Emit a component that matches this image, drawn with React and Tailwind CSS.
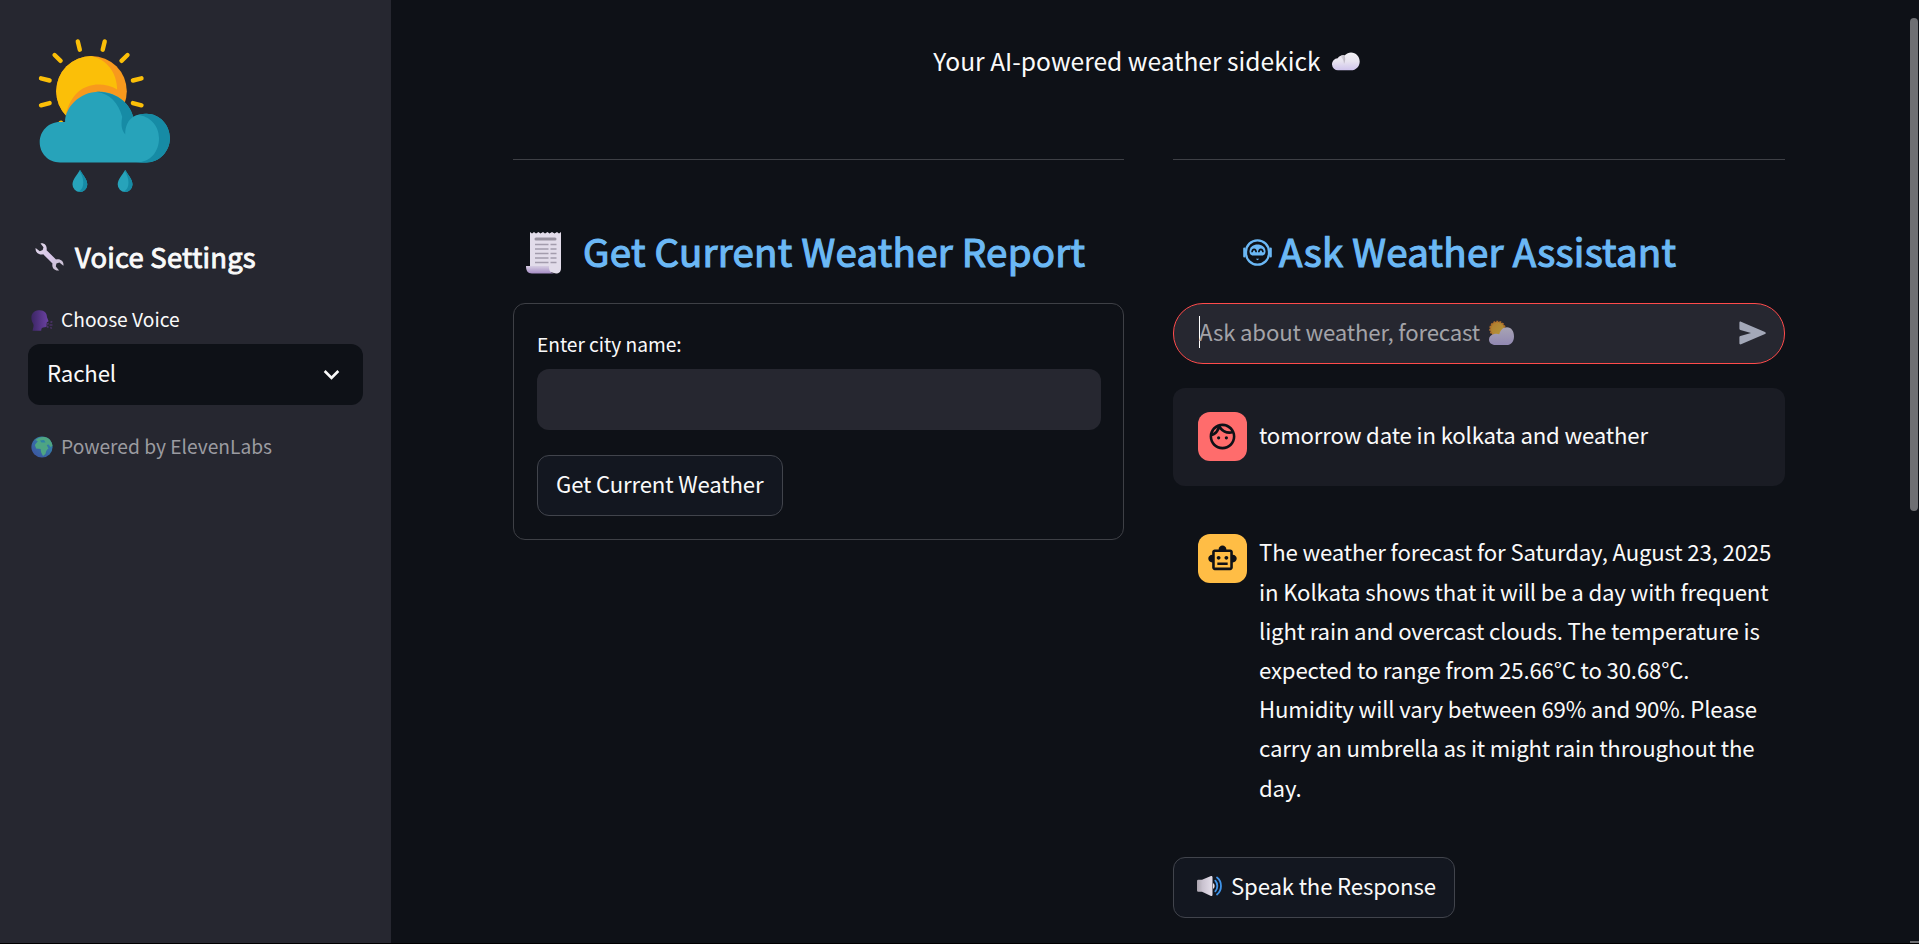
import { MdOutlineFace, MdOutlineSmartToy, MdExpandMore } from "react-icons/md";

function WeatherLogo() {
  return (
    <svg viewBox="0 0 180 190" className="block h-[190px] w-[180px]">
      <path d="M57.800 21.500l2 8.200M84.700 21.500l-2 8.200M34.600 35l6 5.800M107.500 35l-6 5.800M21 58.300l8.600 2.200M121.500 58.300l-8.600 2.200M21 85.300l8.600-2.200M121.500 85.300l-8.600-2.200M40.500 103l.5-.3" stroke="#fbbf08" strokeWidth="4.400" strokeLinecap="round" />
      <clipPath id="sun"><circle cx="71.500" cy="71.300" r="35.300" /></clipPath>
      <g clipPath="url(#sun)">
        <rect x="30" y="30" width="80" height="80" fill="#f8991d" />
        <path d="M71 36c15 3 26 16 26.200 33.500C80 60 53 62 45.500 96L30 100V30h41z" fill="#fbbf08" />
      </g>
      <path d="M40 142.500C28 142.500 19.700 133 19.700 122.300S28 102 40 102h5.100C44.800 88 59 71.700 79 71.700c16 0 30 10 34.200 25 4-2.300 8-3 13.300-3 13 0 23.400 11 23.400 24.400s-10.400 24.400-23.400 24.400z" fill="#27a3ba" />
      <path d="M76 71.700c18 0 33 9 37.200 25-5 3.500-8 9-8 17.500-3.500-4-4.500-9-3-17.500-4-14-12-23-26.200-25z" fill="#168ba5" />
      <path d="M118 95c4-1.200 6-1.300 8.500-1.300 13 0 23.400 11 23.400 24.400s-10.400 24.400-23.400 24.400H116c15 0 23-11 23-24.400S129 96 118 95z" fill="#168ba5" />
      <path d="M60 150c3 5 7.300 9.500 7.300 14.500a7.400 7.400 0 0 1-14.800 0c0-5 4.500-9.500 7.500-14.500zM105.200 150c3 5 7.300 9.500 7.300 14.500a7.400 7.400 0 0 1-14.800 0c0-5 4.500-9.500 7.500-14.500z" fill="#27a3ba" />
      <path d="M60 150c3 5 7.300 9.500 7.300 14.500a7.400 7.400 0 0 1-8.800 7.300c7-3.800 5.500-14 1-20.800zM105.200 150c3 5 7.300 9.500 7.300 14.500a7.400 7.400 0 0 1-8.800 7.300c7-3.800 5.500-14 1-20.800z" fill="#168ba5" />
    </svg>
  );
}

function Wrench() {
  return (
    <svg viewBox="0 0 29 28" className="h-7 w-[29px]">
      <defs>
        <linearGradient id="steel" x1="0" y1="0" x2="1" y2="1">
          <stop offset="0" stopColor="#ded6e6" /><stop offset=".5" stopColor="#d9c7ea" /><stop offset="1" stopColor="#c5bfcc" />
        </linearGradient>
      </defs>
      <path d="M5.500.5C9-.5 12.500 2.500 11.600 7.200L21 16.500c4.500-1.200 8.200 2 7.400 6.300l-4-3.200-3 .8-.6 3 3.300 4c-4.500.8-7.600-2.600-6.600-7L8.200 11.200C4 12.200.2 9.500.6 5l4.200 3.200L7.700 7l.8-2.800z" fill="url(#steel)" />
    </svg>
  );
}

function Speaking() {
  return (
    <svg viewBox="0 0 22 21" className="h-[21px] w-[22px]">
      <defs>
        <linearGradient id="head" x1="0" y1="0" x2="1" y2="0">
          <stop offset="0" stopColor="#3c2664" /><stop offset="1" stopColor="#6c42a4" />
        </linearGradient>
      </defs>
      <path d="M7.500.3c5.500-.6 8.500 2.700 8.500 7l1.600 4-1.800 1c.2 4-.3 5.300-3.800 5.200-1.500.3-1.700 1.500-1.800 3.200H1.500c.8-3 1.500-5 .7-7C-1.500 8 .5.800 7.500.3z" fill="url(#head)" />
      <path d="M15 14.500l2.800-1M19.500 12.500l1.800-1.200M18.500 15h3M15.500 16l2 1.500M19.300 17.300l1.500 1.200" stroke="#4a3266" strokeWidth="1.600" />
    </svg>
  );
}

function Globe() {
  return (
    <svg viewBox="0 0 22 22" className="h-[22px] w-[22px]">
      <defs>
        <linearGradient id="sea" x1="1" y1="0" x2="0" y2="1">
          <stop offset="0" stopColor="#2f8dae" /><stop offset="1" stopColor="#3e4fa0" />
        </linearGradient>
      </defs>
      <circle cx="11" cy="11" r="10.600" fill="url(#sea)" />
      <path d="M4.500 4C8 .8 14 0 17.500 2.600c2.500 2 3.500 4.600 4 7.400l-2 1-1.800-2.500-2 .5 1.800 3.500c-2 1-2.500 3-3 5.500l-2.500 2-1.800-3.500-.6-3.500-4.400-.6L3.800 9l3-3.800z" fill="#4ea583" />
      <path d="M9 4.500l4-.6 1.500 2.500-4 .2z" fill="#2f83a5" />
    </svg>
  );
}

function Cloud() {
  return (
    <svg viewBox="0 0 28 19" className="h-[19px] w-7">
      <defs>
        <linearGradient id="puff" x1="0" y1="0" x2="0" y2="1">
          <stop offset="0" stopColor="#f2f0f4" /><stop offset=".5" stopColor="#e8e4f0" /><stop offset="1" stopColor="#cfc4ec" />
        </linearGradient>
        <linearGradient id="puff-shade" x1="0" y1="0" x2="1" y2="0">
          <stop offset="0" stopColor="#e6e2ec" /><stop offset="1" stopColor="#b9b4c0" />
        </linearGradient>
      </defs>
      <path d="M6.300 18.200a6 6 0 0 1-.6-12C7.500 3.700 10 3 12.500 3.400 14.500 1.300 17 .4 19 .4c5 0 8.700 4 8.700 9s-3.700 8.800-8.700 8.800z" fill="url(#puff)" />
      <path d="M8 4.200c1.700-.9 3-1 4.500-.8 1.200 3 .8 6-.5 8.500C11.500 8 10.500 5.500 8 4.200z" fill="url(#puff-shade)" />
    </svg>
  );
}

function Receipt() {
  return (
    <svg viewBox="0 0 36 43" className="h-[43px] w-9">
      <defs>
        <linearGradient id="roll" x1="0" y1="0" x2="0" y2="1">
          <stop offset="0" stopColor="#d6cde2" /><stop offset="1" stopColor="#a58cc4" />
        </linearGradient>
      </defs>
      <path d="M4 1l2 1.500L8 1l2 1.500L12.500 1l2 1.500L17 1l2 1.500L21.500 1l2 1.500L26 1l2.500 1.500L31 1l2 1.500L35 1v36c0 4-2 5.500-5 5.500L4 36z" fill="#e2dcea" />
      <path d="M0 35h23c-.5 4 1.500 7.500 6 7.500H6c-4.500 0-6-3-6-7.500z" fill="url(#roll)" />
      <path d="M10 8h19" stroke="#97919f" strokeWidth="3" strokeLinecap="round" />
      <path d="M9 13.500h13.500M24.500 13.500h6M9 18h13.500M24.500 18h6M9 22.500h13.500M24.500 22.500h6M9 27h13.500M24.500 27h6M9 31.500h13.500M24.500 31.500h6" stroke="#a39cad" strokeWidth="1.300" />
    </svg>
  );
}

function AssistantFace() {
  return (
    <svg viewBox="0 0 29 27" className="h-[27px] w-[29px]" fill="none" stroke="#6bb8f5">
      <rect x="3" y="1.300" width="23" height="24.400" rx="11.500" strokeWidth="2.300" />
      <path d="M1.300 9.500v8M27.700 9.500v8" strokeWidth="2.200" strokeLinecap="round" />
      <path d="M6.500 12.500C6.500 3 22.500 3 22.500 12.500c0 2.600-1.500 4-3.500 4h-9C8 16.500 6.500 15.100 6.500 12.500z" fill="#6bb8f5" stroke="none" />
      <path d="M9 13.300c.3-4 3.900-4 4.200 0M15.800 13.300c.3-4 3.900-4 4.200 0" stroke="#0e1117" strokeWidth="1.700" />
      <path d="M12.800 19.800h3.400l-1.700 1.500z" fill="#6bb8f5" stroke="none" />
    </svg>
  );
}

function SunCloud() {
  return (
    <svg viewBox="0 0 25 27" className="h-[27px] w-[25px]">
      <defs>
        <linearGradient id="dim" x1="0" y1="0" x2="0" y2="1">
          <stop offset="0" stopColor="#a8a4b4" /><stop offset="1" stopColor="#9188b2" />
        </linearGradient>
        <linearGradient id="dim-sun" x1="0" y1="0" x2="1" y2="1">
          <stop offset="0" stopColor="#b07a2c" /><stop offset="1" stopColor="#b59a3e" />
        </linearGradient>
      </defs>
      <circle cx="8.500" cy="10" r="7.300" fill="url(#dim-sun)" stroke="#b06f2b" strokeWidth="2" strokeDasharray="2 1" />
      <path d="M6.500 26C2.500 26 0 23.700 0 20.500c0-2.700 2-4.900 5-5.500 2-.6 3.700-.4 5.300.2C11.300 11 14 8.200 18 8.200c4.500 0 7 4 7 9.200S22 26 17.500 26z" fill="url(#dim)" />
    </svg>
  );
}

function SendArrow() {
  return (
    <svg viewBox="0 0 27 24" className="h-6 w-[27px]">
      <path d="M2 .7l24 10.200c1 .5 1 1.600 0 2.100L2 23.300c-.9.300-1.600-.1-1.600-1v-6c0-.8.300-1.100 1-1.300L12 12 1.400 9c-.7-.2-1-.6-1-1.300v-6C.4.800 1.100.4 2 .7z" fill="#a3a8b8" />
    </svg>
  );
}

function Speaker() {
  return (
    <svg viewBox="0 0 26 20" className="h-5 w-[26px]">
      <defs>
        <linearGradient id="cone" x1="0" y1="0" x2="1" y2="0">
          <stop offset="0" stopColor="#a9a3ad" /><stop offset=".35" stopColor="#c9c2cf" /><stop offset="1" stopColor="#e4deea" />
        </linearGradient>
      </defs>
      <path d="M0 5.500C0 4 .5 3.800 2 3.800h3L14 0c1.300 0 1.500.5 1.500 1.500v17c0 1-.3 1.500-1.500 1.500L5 15.800H2c-1.500 0-2-.3-2-1.800z" fill="url(#cone)" />
      <path d="M16 7a3.500 3.500 0 0 1 0 6z" fill="#e4deea" />
      <path d="M18.300 4.700c2.700 3 2.700 7.500 0 10.600M20 1.500c5.300 4 5.300 13 0 17" stroke="#3f94ea" strokeWidth="1.800" fill="none" strokeLinecap="round" />
    </svg>
  );
}

const answer = [
  "The weather forecast for Saturday, August 23, 2025",
  "in Kolkata shows that it will be a day with frequent",
  "light rain and overcast clouds. The temperature is",
  "expected to range from 25.66°C to 30.68°C.",
  "Humidity will vary between 69% and 90%. Please",
  "carry an umbrella as it might rain throughout the",
  "day.",
];

function Sidebar() {
  return (
    <aside className="flex w-[391px] shrink-0 flex-col bg-[#262730] pt-5">
      <div className="pl-5"><WeatherLogo /></div>
      <h2 className="mt-[27px] flex h-10 items-center gap-[11px] pl-[35px] text-[27.400px] font-normal tracking-[0.22px]">
        <Wrench /><span className="pb-px [-webkit-text-stroke:0.9px_currentColor]">Voice Settings</span>
      </h2>
      <label className="mt-[27px] flex h-8 items-center gap-2 pl-[31px] text-[19.200px] tracking-normal">
        <Speaking /><span>Choose Voice</span>
      </label>
      <button className="mx-7 mt-2 flex h-[61px] items-center justify-between rounded-xl bg-[#0e1117] pl-[19px] pr-4 tracking-[-0.16px]">
        <span className="pb-[3px]">Rachel</span>
        <MdExpandMore className="size-[31px]" />
      </button>
      <p className="mt-[26px] flex h-8 items-center gap-2 pl-[31px] text-[19.200px] tracking-normal text-[#9b9ba0]">
        <Globe /><span>Powered by ElevenLabs</span>
      </p>
    </aside>
  );
}

export default function App() {
  return (
    <div className="relative flex h-[944px] w-full overflow-hidden border-b border-black bg-[#0e1117] font-['Noto_Sans_CJK_SC',sans-serif] text-[22.200px] leading-[39.200px] tracking-[-0.16px] text-[#fafafa]">
      <Sidebar />
      <main className="flex grow flex-col pl-[122px] pr-[134px] pt-[41px]">
        <p className="flex h-10 items-center justify-center gap-[11px] pr-[5px] text-[24.600px] tracking-normal">
          <span>Your AI-powered weather sidekick</span><Cloud />
        </p>
        <div className="mt-[78px] grid grid-cols-[611px_612px] gap-[49px]">
          <section className="border-t border-[#3e4046]">
            <h3 className="mt-[62px] flex h-[58px] items-center gap-[21px] pl-[13px] text-[38.400px] font-normal tracking-[0.3px] text-[#6bb8f5]">
              <span className="pt-[2px]"><Receipt /></span><span className="[-webkit-text-stroke:1.2px_currentColor]">Get Current Weather Report</span>
            </h3>
            <form className="mt-[23px] flex h-[237px] flex-col items-start rounded-xl border border-[#3e4046] pl-[23px] pr-[22px] pt-6">
              <label className="h-[33px] text-[19.200px] leading-8 tracking-[-0.04px]">Enter city name:</label>
              <input className="mt-2 h-[61px] w-full rounded-xl bg-[#262730] px-4 outline-none" />
              <button type="button" className="mt-[25px] h-[61px] rounded-xl border border-[#41444c] bg-[#131720] pb-[3px] pl-[18px] pr-[19px] tracking-[-0.16px]">Get Current Weather</button>
            </form>
          </section>
          <section className="border-t border-[#3e4046]">
            <h3 className="mt-[62px] flex h-[58px] items-center gap-[7px] pl-[70px] text-[38.400px] font-normal tracking-[0.3px] text-[#6bb8f5]">
              <span className="pt-[2px]"><AssistantFace /></span><span className="[-webkit-text-stroke:1.2px_currentColor]">Ask Weather Assistant</span>
            </h3>
            <div className="mt-[23px] flex h-[61px] items-center rounded-[30px] border border-[#ff4b4b] bg-[#262730] pl-[25px] pr-[18px] text-[#a3a3a8]">
              <span className="mb-1 h-8 w-px bg-white" />
              <span className="-ml-px pb-1">Ask about weather, forecast</span>
              <span className="ml-[9px] pb-[2px]"><SunCloud /></span>
              <span className="ml-auto pb-px"><SendArrow /></span>
            </div>
            <div className="mt-6 flex h-[98px] items-start gap-3 rounded-xl bg-[#1a1c24] pl-[25px] pt-6">
              <div className="flex size-[49px] items-center justify-center rounded-xl bg-[#ff6c6c] text-[#0e1117]"><MdOutlineFace className="size-[31px]" /></div>
              <span className="pt-[3px]">tomorrow date in kolkata and weather</span>
            </div>
            <div className="mt-12 flex gap-3 pl-[25px]">
              <div className="flex size-[49px] shrink-0 items-center justify-center rounded-xl bg-[#ffbd45] text-[#0e1117]"><MdOutlineSmartToy className="size-[31px]" /></div>
              <div className="-mt-[1.700px] whitespace-nowrap pb-[1.700px]">
                {answer.map((line) => <p key={line}>{line}</p>)}
              </div>
            </div>
            <button className="mt-[49px] flex h-[61px] items-center gap-2 rounded-xl border border-[#41444c] bg-[#131720] pl-[23px] pr-[18px] tracking-[-0.16px]">
              <span className="pb-[3px]"><Speaker /></span><span className="pb-1">Speak the Response</span>
            </button>
          </section>
        </div>
      </main>
      <div className="absolute right-px top-[18px] h-[493px] w-2 rounded-full bg-[#6e6f73]" />
      <div className="absolute bottom-0 right-0 h-[2px] w-[9px] bg-[#6e6f73]" />
    </div>
  );
}
